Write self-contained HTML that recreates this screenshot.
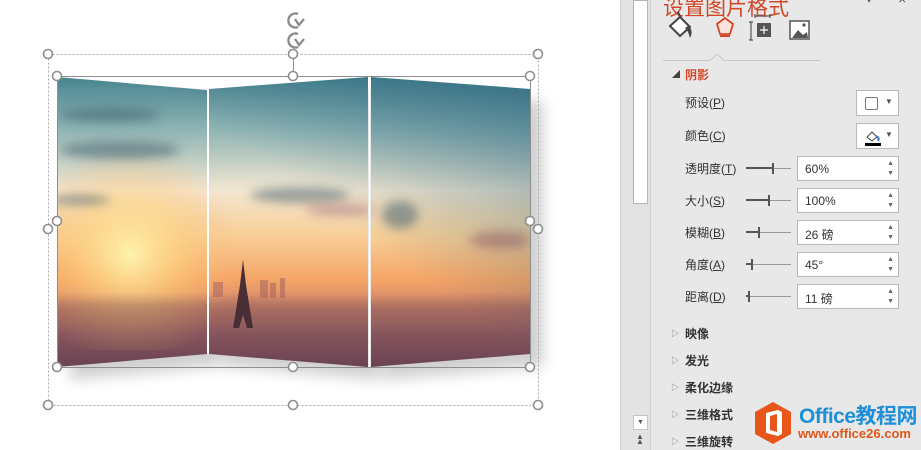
<!DOCTYPE html>
<html><head><meta charset="utf-8"><style>
*{margin:0;padding:0;box-sizing:border-box}
body{width:921px;height:450px;overflow:hidden;background:#fff;position:relative;font-family:"Liberation Sans","Noto Sans CJK SC",sans-serif;font-size:12px;color:#333}
.abs{position:absolute}
.lbl{position:absolute;left:685px;font-size:12px;color:#333}
.inp{position:absolute;left:797px;width:102px;height:25px;background:#fff;border:1px solid #b9b9b9;font-size:12px;padding:5px 0 0 7px;color:#333}
.inp:after{content:"▲\A▼";white-space:pre;position:absolute;right:4px;top:2px;font-size:7px;line-height:10px;color:#666}
.sl{position:absolute;left:746px;width:45px;height:1px;background:#999}
.sl b{position:absolute;top:-1px;left:0;height:2px;background:#555}
.sl i{position:absolute;top:-5px;width:2px;height:11px;background:#555}
.sec{position:absolute;left:685px;font-weight:bold;font-size:12px;color:#333}
.tri{position:absolute;left:671px;font-size:8px;color:#777}
</style></head><body>
<svg class="abs" style="left:0;top:0" width="620" height="450">
<defs>
<linearGradient id="sky" x1="0" y1="0" x2="0" y2="1">
<stop offset="0" stop-color="#3f7e8c"/><stop offset="0.2" stop-color="#8fb4b4"/>
<stop offset="0.4" stop-color="#f3e7d2"/><stop offset="0.55" stop-color="#f8cf98"/>
<stop offset="0.7" stop-color="#f4a466"/><stop offset="0.78" stop-color="#d58a6c"/>
<stop offset="0.88" stop-color="#9a6266"/><stop offset="1" stop-color="#6e4456"/></linearGradient>
<radialGradient id="sun" cx="130" cy="255" r="110" gradientUnits="userSpaceOnUse">
<stop offset="0" stop-color="#fff6b0" stop-opacity="0.95"/><stop offset="0.5" stop-color="#ffd27a" stop-opacity="0.5"/><stop offset="1" stop-color="#ffb070" stop-opacity="0"/></radialGradient>
<linearGradient id="rt" x1="540" y1="70" x2="400" y2="260" gradientUnits="userSpaceOnUse"><stop offset="0" stop-color="#1f5a78" stop-opacity="0.55"/><stop offset="1" stop-color="#1f5a78" stop-opacity="0"/></linearGradient>
<filter id="bl"><feGaussianBlur stdDeviation="5"/></filter>
<filter id="sh"><feGaussianBlur stdDeviation="7"/></filter>
<clipPath id="cp"><polygon points="57,77 207,90 207,354 57,367"/><polygon points="209,89 368,77 368,367 209,354"/><polygon points="371,77 530,89 530,354 371,367"/></clipPath>
</defs>
<g filter="url(#sh)" opacity="0.35"><polygon points="70,90 220,102 220,366 70,380" fill="#777"/><polygon points="222,102 381,90 381,380 222,366" fill="#777"/><polygon points="384,90 543,102 543,366 384,380" fill="#777"/></g>
<g clip-path="url(#cp)">
<rect x="50" y="70" width="490" height="300" fill="url(#sky)"/>
<rect x="50" y="70" width="490" height="300" fill="url(#rt)"/>
<rect x="50" y="130" width="490" height="220" fill="url(#sun)"/>
<g filter="url(#bl)" opacity="0.5" fill="#3d5b6a">
<ellipse cx="120" cy="150" rx="60" ry="9"/><ellipse cx="110" cy="115" rx="50" ry="7"/><ellipse cx="300" cy="195" rx="50" ry="8"/><ellipse cx="80" cy="200" rx="30" ry="5"/><ellipse cx="400" cy="215" rx="18" ry="14"/><ellipse cx="500" cy="240" rx="30" ry="9" fill="#8a5a6a"/><ellipse cx="340" cy="210" rx="35" ry="6" fill="#a07080"/></g>
<rect x="50" y="300" width="490" height="70" fill="#5a3a48" opacity="0.3" filter="url(#bl)"/>
<path d="M243,260 L244,268 L246,285 L250,310 L253,328 L247,328 L243,315 L239,328 L233,328 L236,310 L240,285 L242,268 Z" fill="#4a2e36"/>
<g fill="#a06060" opacity="0.5"><rect x="260" y="280" width="8" height="18"/><rect x="270" y="283" width="6" height="15"/><rect x="280" y="278" width="5" height="20"/><rect x="213" y="282" width="10" height="15"/></g>
</g>
<line x1="208" y1="89" x2="208" y2="354" stroke="#fff" stroke-width="2"/>
<line x1="369.5" y1="77" x2="369.5" y2="367" stroke="#fff" stroke-width="2"/>
<rect x="48.5" y="54.5" width="490" height="351" fill="none" stroke="#aaa" stroke-dasharray="2,2"/>
<rect x="57.5" y="76.5" width="473" height="291" fill="none" stroke="#8e8e8e"/>
<line x1="293.5" y1="54" x2="293.5" y2="76" stroke="#8e8e8e"/>
<g fill="#fff" stroke="#8e8e8e" stroke-width="1.6">
<circle cx="48" cy="54" r="4.5"/><circle cx="293" cy="54" r="4.5"/><circle cx="538" cy="54" r="4.5"/><circle cx="48" cy="229" r="4.5"/><circle cx="538" cy="229" r="4.5"/><circle cx="48" cy="405" r="4.5"/><circle cx="293" cy="405" r="4.5"/><circle cx="538" cy="405" r="4.5"/>
<circle cx="57" cy="76" r="4.5"/><circle cx="293" cy="76" r="4.5"/><circle cx="530" cy="76" r="4.5"/><circle cx="57" cy="221" r="4.5"/><circle cx="530" cy="221" r="4.5"/><circle cx="57" cy="367" r="4.5"/><circle cx="293" cy="367" r="4.5"/><circle cx="530" cy="367" r="4.5"/></g>
<g fill="none" stroke="#8e8e8e" stroke-width="2.4">
<path d="M298,14 A7,7 0 1 0 298,27"/><path d="M295,19 L299,25 L304,19"/>
<path d="M298,34 A7,7 0 1 0 298,47"/><path d="M295,39 L299,45 L304,39"/></g>
</svg>
<div class="abs" style="left:620px;top:0;width:31px;height:450px;background:#e3e3e3;border-left:1px solid #cfcfcf;border-right:1px solid #cfcfcf"></div>
<div class="abs" style="left:633px;top:0;width:15px;height:204px;background:#fff;border:1px solid #b5b5b5"></div>
<div class="abs" style="left:633px;top:415px;width:15px;height:15px;background:#fff;border:1px solid #c5c5c5;font-size:7px;text-align:center;line-height:13px;color:#555">▼</div>
<div class="abs" style="left:636px;top:434px;font-size:8px;color:#555;line-height:5px">▲<br>▲</div>
<div class="abs" style="left:651px;top:0;width:270px;height:450px;background:#e8e8e8"></div>
<div class="abs" style="left:663px;top:-8px;font-size:21px;color:#d24726;letter-spacing:0px">设置图片格式</div>
<div class="abs" style="left:866px;top:-8px;font-size:12px;color:#555">▾</div>
<div class="abs" style="left:898px;top:-9px;font-size:14px;color:#555">×</div>
<svg class="abs" style="left:660px;top:10px" width="160" height="60">
<path d="M10,16 L20,7 L30,17 L20,26 Z" fill="#fff" stroke="#444" stroke-width="2"/><path d="M20,7 L18,2" stroke="#444" stroke-width="2"/><path d="M28,16 Q34,20 30,28 Q28,20 25,18" fill="#444"/>
<path d="M57,14 L65,8 L73,14 L70,24 L60,24 Z" fill="#fbe2da" stroke="#d24726" stroke-width="1.8"/><line x1="60" y1="26" x2="70" y2="26" stroke="#d24726" stroke-width="2"/>
<path d="M91,12 V30 M89,12 H93 M89,30 H93 M95,4 V8 M95,6 H110 M110,4 V8" stroke="#555" stroke-width="1.2" fill="none"/><rect x="97" y="13" width="14" height="14" fill="#555"/><path d="M104,16 V24 M100,20 H108" stroke="#fff" stroke-width="1.2"/>
<rect x="130" y="11" width="19" height="18" fill="#fff" stroke="#555" stroke-width="1.5"/><path d="M132,28 L138,20 L143,25 L147,22 L148,28 Z" fill="#555"/><circle cx="144" cy="15" r="1.6" fill="#555"/>
<path d="M3,50.5 H50 L57,44 L64,50.5 H261" fill="none" stroke="#c8c8c8"/>
</svg>
<div class="abs" style="left:672px;top:69px;font-size:8px;color:#444">◢</div>
<div class="abs" style="left:685px;top:66px;font-weight:bold;color:#d24726">阴影</div>
<div class="lbl" style="top:94px">预设(<u>P</u>)</div>
<div class="lbl" style="top:127px">颜色(<u>C</u>)</div>
<div class="lbl" style="top:160px">透明度(<u>T</u>)</div>
<div class="lbl" style="top:192px">大小(<u>S</u>)</div>
<div class="lbl" style="top:224px">模糊(<u>B</u>)</div>
<div class="lbl" style="top:256px">角度(<u>A</u>)</div>
<div class="lbl" style="top:288px">距离(<u>D</u>)</div>
<div class="abs" style="left:856px;top:90px;width:43px;height:26px;background:#fff;border:1px solid #b9b9b9"><div class="abs" style="left:8px;top:6px;width:13px;height:13px;border:1px solid #777;border-radius:2px"></div><div class="abs" style="left:28px;top:6px;font-size:8px;color:#555">▼</div></div>
<div class="abs" style="left:856px;top:123px;width:43px;height:26px;background:#fff;border:1px solid #b9b9b9"><svg class="abs" style="left:7px;top:4px" width="18" height="18"><path d="M3,9 L8,4 L13,9 L8,13 Z" fill="#fff" stroke="#444"/><path d="M12,8 Q16,10 14,13" stroke="#3a78c0" stroke-width="2" fill="none"/><rect x="1" y="15" width="16" height="3" fill="#000"/></svg><div class="abs" style="left:28px;top:6px;font-size:8px;color:#555">▼</div></div>
<div class="sl" style="top:168px"><b style="width:26px"></b><i style="left:26px"></i></div>
<div class="sl" style="top:200px"><b style="width:22px"></b><i style="left:22px"></i></div>
<div class="sl" style="top:232px"><b style="width:12px"></b><i style="left:12px"></i></div>
<div class="sl" style="top:264px"><b style="width:5px"></b><i style="left:5px"></i></div>
<div class="sl" style="top:296px"><b style="width:2px"></b><i style="left:2px"></i></div>
<div class="inp" style="top:156px">60%</div>
<div class="inp" style="top:188px">100%</div>
<div class="inp" style="top:220px">26 磅</div>
<div class="inp" style="top:252px">45°</div>
<div class="inp" style="top:284px">11 磅</div>
<div class="tri" style="top:328px">▷</div><div class="sec" style="top:325px">映像</div>
<div class="tri" style="top:355px">▷</div><div class="sec" style="top:352px">发光</div>
<div class="tri" style="top:382px">▷</div><div class="sec" style="top:379px">柔化边缘</div>
<div class="tri" style="top:409px">▷</div><div class="sec" style="top:406px">三维格式</div>
<div class="tri" style="top:436px">▷</div><div class="sec" style="top:433px">三维旋转</div>
<svg class="abs" style="left:752px;top:400px" width="42" height="46"><polygon points="21,2 39,12 39,34 21,44 3,34 3,12" fill="#e8561b"/><path d="M14,13 L26,10 L30,12 V34 L26,36 L14,33 Z M18,16 V30 L25,32 V14 Z" fill="#fff" fill-rule="evenodd"/></svg>
<div class="abs" style="left:799px;top:400px;font-size:21px;font-weight:bold;color:#1e8fd8;letter-spacing:-0.5px">Office教程网</div>
<div class="abs" style="left:798px;top:426px;font-size:13px;font-weight:bold;color:#e0561a">www.office26.com</div>
</body></html>
